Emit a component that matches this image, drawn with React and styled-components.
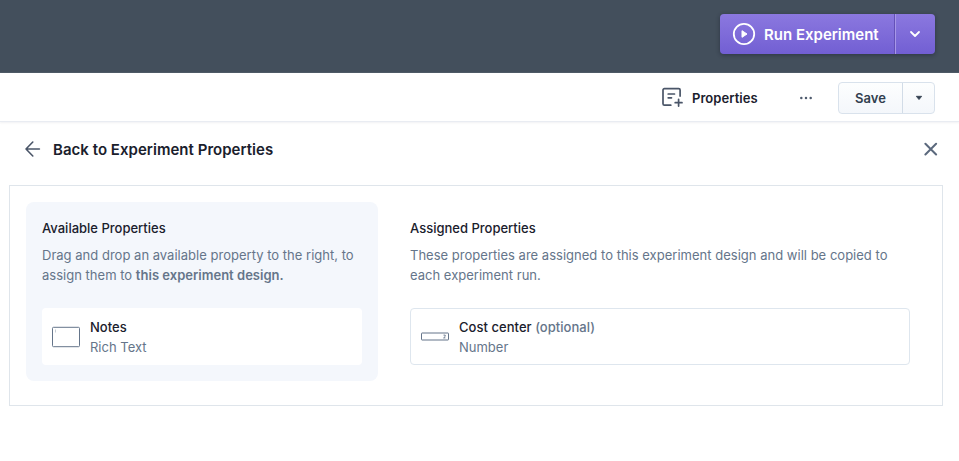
import React from "react";
import styled, { createGlobalStyle } from "styled-components";

const GlobalStyle = createGlobalStyle`
  * { box-sizing: border-box; }
  body {
    margin: 0;
    background: #fff;
    color: #1a202c;
    font-family: Inter, "Liberation Sans", sans-serif;
    font-size: 13px;
    -webkit-font-smoothing: antialiased;
  }
  button { font-family: inherit; margin: 0; padding: 0; border: 0; background: none; color: inherit; }
  h1, h2, p { margin: 0; }
  svg { display: block; flex: none; }
`;

const Page = styled.div`
  height: 461px;
  overflow: hidden;
  display: flex;
  flex-direction: column;
`;

const TopBar = styled.header`
  height: 73px;
  flex: none;
  display: flex;
  justify-content: flex-end;
  align-items: flex-start;
  padding: 14px 24px 0 0;
  background: #434f5c;
  border-bottom: 1px solid #4f5b67;
`;

const RunGroup = styled.div`
  display: flex;
  width: 215px;
  height: 40px;
  border-radius: 4px;
  background: linear-gradient(#8b78df, #725fd3);
  box-shadow: 0 1px 4px rgba(20, 25, 40, 0.45);
  color: #fff;
`;

const RunButton = styled.button`
  width: 175px;
  display: flex;
  align-items: center;
  padding-left: 12px;
  gap: 8px;
  font-size: 15px;
  font-weight: 600;
  white-space: nowrap;
  border-right: 1px solid #6451b8;
`;

const RunMenu = styled.button`
  flex: 1;
  display: flex;
  align-items: center;
  justify-content: center;
  padding-right: 2px;
  border-left: 1px solid #a797e8;
`;

const Toolbar = styled.div`
  height: 49px;
  flex: none;
  display: flex;
  align-items: center;
  justify-content: flex-end;
  padding: 1px 24px 0 0;
  border-bottom: 1px solid #e9ecf2;
  box-shadow: 0 1px 2px rgba(50, 60, 90, 0.07);
`;

const PropertiesButton = styled.button`
  display: flex;
  align-items: center;
  gap: 9px;
  width: 96px;
  font-size: 13px;
  font-weight: 600;
  letter-spacing: 0.05px;
  white-space: nowrap;
`;

const MoreButton = styled.button`
  margin: 0 25px 0 41px;
  color: #4f5b6e;
`;

const SaveGroup = styled.div`
  display: flex;
  width: 97px;
  height: 32px;
  border: 1px solid #d9e2ec;
  border-radius: 4px;
  background: linear-gradient(#fdfefe, #f4f7fb);
  color: #323f4f;
`;

const SaveButton = styled.button`
  width: 64px;
  border-right: 1px solid #d2dce7;
  font-size: 13px;
  font-weight: 600;
`;

const SaveMenu = styled.button`
  flex: 1;
  display: flex;
  align-items: center;
  justify-content: center;
`;

const TitleRow = styled.div`
  height: 54px;
  display: flex;
  align-items: center;
  padding: 0 21px 0 24px;
`;

const Title = styled.h1`
  flex: 1;
  padding: 2px 0 0 12px;
  font-size: 15px;
  font-weight: 600;
  letter-spacing: 0.03px;
  line-height: 20px;
`;

const Panel = styled.main`
  display: flex;
  gap: 16px;
  align-items: flex-start;
  width: 934px;
  height: 221px;
  margin: 9px 0 0 9px;
  padding: 16px;
  border: 1px solid #dfe5eb;
`;

const Column = styled.section`
  width: ${(p) => (p.$available ? 352 : 532)}px;
  height: 179px;
  padding: 16px;
  border-radius: 8px;
  background: ${(p) => (p.$available ? "#f4f7fc" : "transparent")};
`;

const ColumnTitle = styled.h2`
  font-size: 13px;
  font-weight: 500;
  line-height: 20px;
`;

const Description = styled.p`
  margin-top: 8px;
  height: 39px;
  color: #65758a;
  font-size: 13px;
  letter-spacing: 0.015px;
  line-height: 19.5px;
  white-space: nowrap;
`;

const Strong = styled.strong`
  font-weight: 600;
`;

const PropertyCard = styled.div`
  display: flex;
  align-items: center;
  gap: 10px;
  width: ${(p) => (p.$outlined ? 500 : 320)}px;
  height: 57px;
  margin-top: 23px;
  padding-left: ${(p) => (p.$outlined ? 10 : 9)}px;
  border: ${(p) => (p.$outlined ? "1px solid #dee6ee" : "0")};
  border-radius: 4px;
  background: #fff;
`;

const PropertyText = styled.div`
  display: flex;
  flex-direction: column;
  padding-top: 2px;
  line-height: 19.5px;
  white-space: nowrap;
`;

const PropertyName = styled.div`
  font-weight: 500;
  letter-spacing: 0.04px;
`;

const Muted = styled.span`
  color: #65758a;
  font-weight: ${(p) => (p.$medium ? 500 : 400)};
`;

const PlayIcon = () => (
  <svg width="24" height="24" viewBox="0 0 24 24">
    <circle cx="12" cy="12" r="10.2" fill="none" stroke="#fff" strokeWidth="1.8" />
    <path d="M10 8.7v6.6l5-3.3z" fill="#fff" stroke="#fff" strokeWidth="1" strokeLinejoin="round" />
  </svg>
);

const ChevronIcon = () => (
  <svg width="12" height="8" viewBox="0 0 12 8">
    <path d="M2 2l4 4 4-4" fill="none" stroke="#fff" strokeWidth="1.8" strokeLinecap="round" strokeLinejoin="round" />
  </svg>
);

const FormAddIcon = () => (
  <svg width="21" height="21" viewBox="0 0 21 21" fill="none" stroke="#4a5568" strokeWidth="1.7" strokeLinecap="round" strokeLinejoin="round">
    <path d="M8.8 18.2H2.4a1.4 1.4 0 0 1-1.4-1.4V3.1a1.4 1.4 0 0 1 1.4-1.4h14.3a1.4 1.4 0 0 1 1.4 1.4v6" />
    <path d="M6.2 7h6.3M6.2 10.8h3.3M13.2 15.7h6.8M16.6 12.3v6.8" />
  </svg>
);

const DotsIcon = () => (
  <svg width="14" height="4" viewBox="0 0 14 4" fill="currentColor">
    <circle cx="2.3" cy="2" r="1.25" />
    <circle cx="7" cy="2" r="1.25" />
    <circle cx="11.7" cy="2" r="1.25" />
  </svg>
);

const CaretIcon = () => (
  <svg width="8" height="6" viewBox="0 0 8 6">
    <path d="M1.3 1.3h5.4L4 4.6z" fill="#323f4f" stroke="#323f4f" strokeWidth=".8" strokeLinejoin="round" />
  </svg>
);

const BackIcon = () => (
  <svg width="17" height="18" viewBox="0 0 17 18" fill="none" stroke="#4a5568" strokeWidth="1.6" strokeLinecap="round" strokeLinejoin="round">
    <path d="M15.4 9H2M8.8 2L2 9l6.8 7" />
  </svg>
);

const CloseIcon = () => (
  <svg width="14" height="14" viewBox="0 0 14 14" fill="none" stroke="#5b697d" strokeWidth="2" strokeLinecap="round">
    <path d="M1.4 1.8l10.7 10.7M12.1 1.8L1.4 12.5" />
  </svg>
);

const RichTextIcon = () => (
  <svg width="29" height="22" viewBox="0 0 29 22" fill="none" stroke="#65758a">
    <rect x="1.5" y="1.3" width="27" height="19.4" rx="1" />
    <path d="M4.5 3.5v3" strokeWidth=".6" opacity=".6" />
  </svg>
);

const NumberIcon = () => (
  <svg width="28" height="9" viewBox="0 0 28 9" fill="none" stroke="#65758a">
    <rect x=".5" y="1" width="27" height="7" rx=".5" />
    <path d="M22.5 3.1h1.7v1.3l-1.6 1.5h1.8" strokeWidth=".9" />
  </svg>
);

export default function App() {
  return (
    <Page>
      <GlobalStyle />
      <TopBar>
        <RunGroup>
          <RunButton><PlayIcon />Run Experiment</RunButton>
          <RunMenu aria-label="Run options"><ChevronIcon /></RunMenu>
        </RunGroup>
      </TopBar>
      <Toolbar>
        <PropertiesButton><FormAddIcon />Properties</PropertiesButton>
        <MoreButton aria-label="More"><DotsIcon /></MoreButton>
        <SaveGroup>
          <SaveButton>Save</SaveButton>
          <SaveMenu aria-label="Save options"><CaretIcon /></SaveMenu>
        </SaveGroup>
      </Toolbar>
      <TitleRow>
        <BackIcon />
        <Title>Back to Experiment Properties</Title>
        <button aria-label="Close"><CloseIcon /></button>
      </TitleRow>
      <Panel>
        <Column $available>
          <ColumnTitle>Available Properties</ColumnTitle>
          <Description>
            Drag and drop an available property to the right, to<br />
            assign them to <Strong>this experiment design.</Strong>
          </Description>
          <PropertyCard>
            <RichTextIcon />
            <PropertyText>
              <PropertyName>Notes</PropertyName>
              <Muted>Rich Text</Muted>
            </PropertyText>
          </PropertyCard>
        </Column>
        <Column>
          <ColumnTitle>Assigned Properties</ColumnTitle>
          <Description>
            These properties are assigned to this experiment design and will be copied to<br />
            each experiment run.
          </Description>
          <PropertyCard $outlined>
            <NumberIcon />
            <PropertyText>
              <PropertyName>Cost center <Muted $medium>(optional)</Muted></PropertyName>
              <Muted>Number</Muted>
            </PropertyText>
          </PropertyCard>
        </Column>
      </Panel>
    </Page>
  );
}
